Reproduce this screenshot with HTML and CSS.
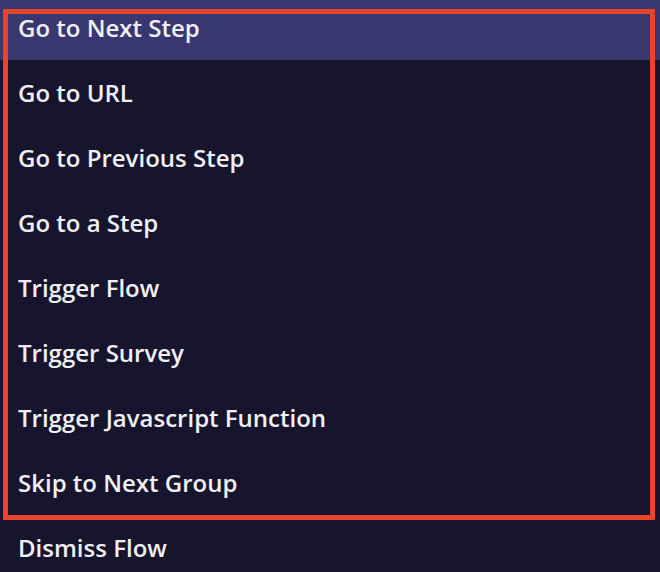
FILE: index.html
```html
<!DOCTYPE html>
<html>
<head>
  <title>Step Actions</title>
  <link rel="stylesheet" href="styles.css">
</head>
<body>
  <ul class="menu">
    <li class="item active">Go to Next Step</li>
    <li class="item">Go to URL</li>
    <li class="item">Go to Previous Step</li>
    <li class="item">Go to a Step</li>
    <li class="item">Trigger Flow</li>
    <li class="item">Trigger Survey</li>
    <li class="item">Trigger Javascript Function</li>
    <li class="item">Skip to Next Group</li>
    <li class="item">Dismiss Flow</li>
  </ul>
  <div class="highlight-box"></div>
</body>
</html>
```

FILE: styles.css
```css
html, body { margin: 0; padding: 0; }
body { background: #17152d; font-family: "Open Sans", "Noto Sans", sans-serif; color: #f0eff4; overflow: hidden; }
.menu { list-style: none; margin: -5px 0 0; padding: 0; }
.item { height: 65px; line-height: 65px; padding-left: 18px; font-size: 24px; font-weight: 580; white-space: nowrap; }
.item.active { background: #393770; }
.highlight-box { position: absolute; left: 3px; top: 9px; width: 652px; height: 511px; box-sizing: border-box; border: 5px solid #e8442c; }
```
